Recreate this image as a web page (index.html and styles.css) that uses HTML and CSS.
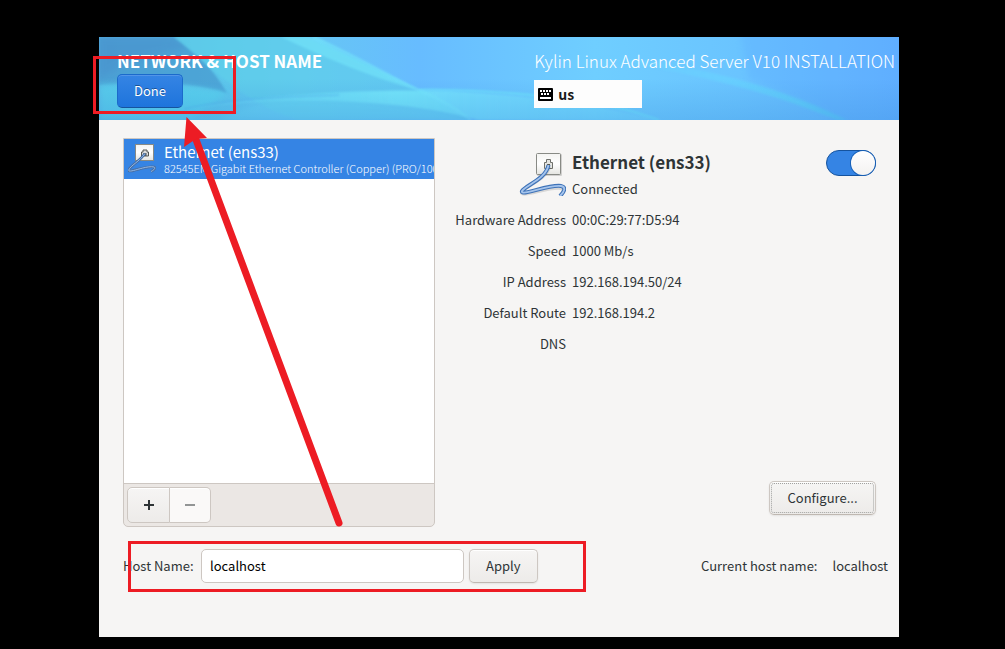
FILE: index.html
```html
<!DOCTYPE html>
<html lang="en">
<head>
<meta charset="utf-8">
<title>Network &amp; Host Name</title>
<link rel="stylesheet" href="styles.css">
</head>
<body>
<svg class="symbols" aria-hidden="true">
  <defs>
    <linearGradient id="plate" x1="0" y1="0" x2="0" y2="1">
      <stop offset="0" stop-color="#f4f4f2"/><stop offset=".5" stop-color="#fff"/><stop offset="1" stop-color="#e4e4e0"/>
    </linearGradient>
    <symbol id="wired" viewBox="0 0 48 48">
      <rect x="19" y="6" width="25" height="22" rx="1" fill="#000" opacity=".15"/>
      <rect x="18.500" y="5.500" width="24" height="21" rx="1" fill="url(#plate)" stroke="#888a85"/>
      <path d="M26.500 20.500v-6h2v-3h4v3h2v6z" fill="#e6e6e2" stroke="#6e706b"/>
      <path d="M29 16h3v3h-3z" fill="#555753"/>
      <path d="M31 19C28 31 8 37 4 44C2 50 31 38 43 40C47 41 46 44 43 47" fill="none" stroke="#000" stroke-width="4" opacity=".12"/>
      <path d="M30.500 17C28 31 8 37 4 43C2 49 31 36 43 38C48 39 47 43 42 48" fill="none" stroke="#3f73b8" stroke-width="4" stroke-linejoin="round"/>
      <path d="M30.500 17C28 31 8 37 4 43C2 49 31 36 43 38C48 39 47 43 42 48" fill="none" stroke="#a5c4ec" stroke-width="1.800" stroke-linejoin="round"/>
    </symbol>
    <symbol id="wired-small" viewBox="0 0 32 32">
      <rect x="7.500" y="3.500" width="18" height="16" fill="url(#plate)" stroke="#888a85"/>
      <path d="M13.500 15v-4h1.500v-2h4v2h1.500v4z" fill="#ddd" stroke="#555753"/>
      <path d="M15.500 12h3v3h-3z" fill="#555753"/>
      <path d="M17 12.500C12 20 2 25 .800 29C0 33 18 24 26 26C28 27 26 29 23 30.500" fill="none" stroke="#4a6e9f" stroke-width="2.600"/>
      <path d="M17 12.500C12 20 2 25 .800 29C0 33 18 24 26 26C28 27 26 29 23 30.500" fill="none" stroke="#8fb8ea" stroke-width="1"/>
    </symbol>
  </defs>
</svg>

<div class="installer">
  <header class="banner">
    <svg class="banner-art" viewBox="0 0 800 83" preserveAspectRatio="none" aria-hidden="true">
      <defs>
        <linearGradient id="sky" x1="0" y1="0" x2="1" y2="0">
          <stop offset="0" stop-color="#57b4e2"/><stop offset=".15" stop-color="#5cc6ea"/><stop offset=".26" stop-color="#66c6f4"/><stop offset=".4" stop-color="#67bcff"/>
          <stop offset=".62" stop-color="#6fceff"/><stop offset=".8" stop-color="#6ac4ff"/><stop offset="1" stop-color="#62b2ff"/>
        </linearGradient>
        <linearGradient id="shade" x1="0" y1="0" x2="0" y2="1">
          <stop offset=".5" stop-color="#3a8fdc" stop-opacity="0"/><stop offset="1" stop-color="#3a8fdc" stop-opacity=".3"/>
        </linearGradient>
        <linearGradient id="ribbon" x1="0" y1="0" x2="1" y2="0">
          <stop offset="0" stop-color="#78ecfc" stop-opacity=".1"/><stop offset=".45" stop-color="#78ecfc" stop-opacity=".85"/><stop offset="1" stop-color="#78e4ff" stop-opacity=".3"/>
        </linearGradient>
        <linearGradient id="beam" gradientUnits="userSpaceOnUse" x1="500" y1="20" x2="745" y2="83">
          <stop offset="0" stop-color="#66dcff" stop-opacity="0"/><stop offset=".5" stop-color="#66dcff" stop-opacity=".4"/><stop offset="1" stop-color="#58d0f4" stop-opacity=".9"/>
        </linearGradient>
        <filter id="soft" x="-10%" y="-30%" width="120%" height="160%"><feGaussianBlur stdDeviation="3"/></filter>
        <filter id="fine" x="-10%" y="-30%" width="120%" height="160%"><feGaussianBlur stdDeviation=".8"/></filter>
      </defs>
      <rect width="800" height="83" fill="url(#sky)"/>
      <path d="M0 0H75C98 16 116 34 128 56C90 44 40 46 0 48Z" fill="#4698cf" opacity=".7" filter="url(#fine)"/>
      <path d="M0 0H75L88 12C55 16 25 26 0 42Z" fill="#4a90cc" opacity=".5" filter="url(#soft)"/>
      <path d="M75 0H205C255 20 290 38 320 54L372 83H200C150 70 120 36 75 0Z" fill="#5ed0ea" opacity=".6" filter="url(#fine)"/>
      <path d="M182 0H215C255 22 290 38 322 54C270 40 225 20 182 0Z" fill="#74e6fa" opacity=".6" filter="url(#fine)"/>
      <path d="M0 48C50 44 100 50 128 56L90 83H0Z" fill="#58d6ee" opacity=".7" filter="url(#soft)"/>
      <path d="M85 72C170 56 280 52 350 54C430 58 490 66 560 83H380C300 62 190 58 85 72Z" fill="url(#ribbon)" filter="url(#fine)"/>
      <path d="M200 61C260 60 320 66 372 83H120C140 70 165 62 200 61Z" fill="#70e2f8" opacity=".35" filter="url(#soft)"/>
      <path d="M215 0C262 22 292 40 322 54C346 64 360 74 372 83" fill="none" stroke="#7af0fc" stroke-width="2" opacity=".55" filter="url(#fine)"/>
      <path d="M320 53C355 52 440 56 500 67C530 72 545 78 560 83" fill="none" stroke="#70e8fc" stroke-width="2" opacity=".8" filter="url(#fine)"/>
      <path d="M85 72C130 62 180 60 240 58" fill="none" stroke="#4ba4e8" stroke-width="1" opacity=".6" filter="url(#fine)"/>
      <path d="M480 18C600 24 690 54 748 83H738C680 58 600 36 480 18Z" fill="url(#beam)" filter="url(#fine)"/>
      <path d="M640 -10H820V93H745C720 68 690 56 650 42Z" fill="#5aa6ff" opacity=".25" filter="url(#soft)"/>
      <rect width="800" height="83" fill="url(#shade)"/>
    </svg>
    <div class="banner-left">
      <h1 class="title">NETWORK &amp; HOST NAME</h1>
      <button class="button button-primary" type="button">Done</button>
    </div>
    <div class="banner-right">
      <p class="product">Kylin Linux Advanced Server V10 INSTALLATION</p>
      <div class="layout">
        <svg class="keyboard" viewBox="0 0 15 13" aria-hidden="true">
          <rect width="15" height="13" rx="1" fill="#000"/>
          <path d="M2 2h2v2H2zM5 2h2v2H5zM8 2h2v2H8zM11 2h2v2h-2zM3 5h2v2H3zM6 5h2v2H6zM9 5h2v2H9zM2 9h11v2H2z" fill="#fff"/>
        </svg>
        <span>us</span>
      </div>
    </div>
  </header>

  <main class="content">
    <div class="columns">
      <section class="devices" aria-label="Devices">
        <ul class="device-list">
          <li class="device">
            <svg class="device-icon" aria-hidden="true"><use href="#wired-small"/></svg>
            <div class="device-text">
              <div class="device-name">Ethernet (ens33)</div>
              <div class="device-model">82545EM Gigabit Ethernet Controller (Copper) (PRO/1000 MT Single Port Adapter)</div>
            </div>
          </li>
        </ul>
        <div class="toolbar">
          <button class="tool" type="button" aria-label="Add device">
            <svg viewBox="0 0 10 10" width="10" height="10"><path d="M0 4h4V0h2v4h4v2H6v4H4V6H0z" fill="#2e3436"/></svg>
          </button>
          <button class="tool tool-off" type="button" aria-label="Remove device" disabled>
            <svg viewBox="0 0 10 10" width="10" height="10"><path d="M0 4h10v2H0z" fill="#929595"/></svg>
          </button>
        </div>
      </section>

      <section class="details" aria-label="Device details">
        <div class="facts">
          <svg class="wired" aria-hidden="true"><use href="#wired"/></svg>
          <div class="summary">
            <div>
              <h2 class="name">Ethernet (ens33)</h2>
              <p class="status">Connected</p>
            </div>
            <input class="switch" type="checkbox" role="switch" aria-label="Ethernet (ens33)" checked>
          </div>
          <span class="key">Hardware Address</span><span>00:0C:29:77:D5:94</span>
          <span class="key">Speed</span><span>1000 Mb/s</span>
          <span class="key">IP Address</span><span>192.168.194.50/24</span>
          <span class="key">Default Route</span><span>192.168.194.2</span>
          <span class="key">DNS</span><span></span>
        </div>
        <button class="button button-focus" type="button">Configure...</button>
      </section>
    </div>

    <form class="host">
      <label class="host-label" for="host">Host Name:</label>
      <input class="entry" id="host" type="text" value="localhost">
      <button class="button" type="button">Apply</button>
      <p class="current"><span>Current host name:</span><span>localhost</span></p>
    </form>
  </main>
</div>

<svg class="marks" viewBox="0 0 1005 649" width="1005" height="649" aria-hidden="true">
  <rect x="94.500" y="57.500" width="140" height="55" fill="none" stroke="#ed1c24" stroke-width="3"/>
  <rect x="129.500" y="542.500" width="455" height="48" fill="none" stroke="#ed1c24" stroke-width="3"/>
  <path d="M339 523L195 137" stroke="#ed1c24" stroke-width="7" stroke-linecap="round"/>
  <path d="M186.500 117L207 138L196 139L184 147Z" fill="#ed1c24"/>
</svg>
</body>
</html>
```

FILE: styles.css
```css
* {
  box-sizing: border-box;
}

body {
  margin: 0;
  min-height: 100vh;
  padding: 37px 106px 12px 99px;
  display: flex;
  background: #000;
  color: #2e3436;
  font: 13px/21px "Noto Sans CJK SC", "Noto Sans", sans-serif;
}

h1, h2, p, ul {
  margin: 0;
  padding: 0;
}

.symbols {
  position: absolute;
  width: 0;
  height: 0;
}

.installer {
  flex: 1;
  min-width: 0;
  display: flex;
  flex-direction: column;
  background: #f6f5f4;
}

/* Banner */
.banner {
  position: relative;
  display: flex;
  justify-content: space-between;
  padding: 12px 4px 12px 18px;
  color: #fff;
}

.banner-art {
  position: absolute;
  inset: 0;
  width: 100%;
  height: 100%;
}

.banner-left,
.banner-right {
  position: relative;
  display: flex;
  flex-direction: column;
  align-items: flex-start;
  gap: 1px;
}

.banner-right {
  gap: 7px;
}

.title,
.product {
  font-size: 17px;
  line-height: 24px;
  white-space: nowrap;
}

.title {
  font-weight: 700;
}

.product {
  font-weight: 300;
}

.layout {
  display: flex;
  align-items: center;
  gap: 5px;
  width: 108px;
  height: 28px;
  padding: 0 4px;
  background: #fdfdfd;
  color: #1a1a1a;
  font-size: 14px;
  font-weight: 700;
}

.keyboard {
  width: 15px;
  height: 13px;
}

/* Buttons */
.button {
  height: 34px;
  padding: 0 16px 2px;
  border: 1px solid #cdc7c2;
  border-bottom-color: #bfb8b1;
  border-radius: 5px;
  background: linear-gradient(#f6f5f4, #edebe9);
  box-shadow: inset 0 1px #fff, 0 1px 2px rgba(0, 0, 0, 0.08);
  color: #2e3436;
  font: inherit;
}

.button-primary {
  border-color: #1b6acb;
  border-bottom-color: #15539e;
  background: linear-gradient(#3584e4, #1e74dc);
  box-shadow: inset 0 1px #5295e8;
  color: #fff;
  text-shadow: 0 -1px rgba(0, 0, 0, 0.35);
}

.button-focus {
  min-width: 107px;
  outline: 1px dotted #a0a1a0;
  outline-offset: -3px;
}

/* Content */
.content {
  flex: 1;
  display: flex;
  flex-direction: column;
  gap: 22px;
  padding: 18px 11px 54px 24px;
}

.columns {
  flex: 1;
  display: flex;
  gap: 18px;
}

.devices {
  width: 312px;
  display: flex;
  flex-direction: column;
  border: 1px solid #cdc7c2;
  border-radius: 0 0 5px 5px;
  overflow: hidden;
  background: #ebe7e4;
}

.device-list {
  flex: 1;
  background: #fff;
  list-style: none;
}

.device {
  display: flex;
  gap: 4px;
  height: 40px;
  padding: 2px 0 2px 4px;
  background: #3584e4;
  color: #fff;
}

.device-icon {
  flex: none;
  width: 32px;
  height: 32px;
}

.device-text {
  min-width: 0;
  overflow: hidden;
  white-space: nowrap;
}

.device-name {
  font-size: 15px;
  line-height: 21px;
}

.device-model {
  font-size: 11px;
  font-weight: 300;
  line-height: 13px;
}

.toolbar {
  display: flex;
  padding: 3px;
  border-top: 1px solid #cdc7c2;
}

.tool {
  display: grid;
  place-items: center;
  width: 43px;
  height: 36px;
  padding: 0;
  border: 1px solid #cdc7c2;
  border-radius: 5px 0 0 5px;
  background: linear-gradient(#f6f5f4, #edebe9);
  box-shadow: inset 0 1px #fff;
}

.tool-off {
  width: 41px;
  border-left: 0;
  border-radius: 0 5px 5px 0;
  background: #faf9f8;
}

.details {
  flex: 1;
  display: flex;
  flex-direction: column;
  align-items: flex-end;
  justify-content: space-between;
  padding: 10px 12px 12px 0;
}

.facts {
  align-self: stretch;
  display: grid;
  grid-template-columns: minmax(113px, auto) 1fr;
  gap: 10px 6px;
}

.wired {
  justify-self: end;
  width: 48px;
  height: 48px;
}

.summary {
  display: flex;
  justify-content: space-between;
  align-items: flex-start;
  padding-top: 2px;
}

.name {
  font-size: 17px;
  line-height: 24px;
  font-weight: 700;
}

.status {
  padding-top: 4px;
}

.key {
  text-align: right;
}

.switch {
  appearance: none;
  display: flex;
  justify-content: flex-end;
  width: 50px;
  height: 26px;
  margin: 0;
  border: 1px solid #15539e;
  border-radius: 13px;
  background: #3584e4;
}

.switch::before {
  content: "";
  width: 24px;
  height: 24px;
  border-radius: 12px;
  background: linear-gradient(#fff, #f3f2f1);
  box-shadow: 0 0 0 1px #185fb4;
}

/* Host name form */
.host {
  display: flex;
  align-items: center;
  gap: 5px;
}

.host-label {
  min-width: 73px;
}

.host-label,
.current {
  padding-bottom: 2px;
}

.entry {
  width: 263px;
  height: 34px;
  padding: 0 8px 1px;
  border: 1px solid #cdc7c2;
  border-radius: 5px;
  background: #fff;
  color: #000;
  font: inherit;
}

.current {
  display: flex;
  gap: 15px;
  margin-left: auto;
}

/* Annotations drawn over the window */
.marks {
  position: absolute;
  top: 0;
  left: 0;
  pointer-events: none;
}
```
